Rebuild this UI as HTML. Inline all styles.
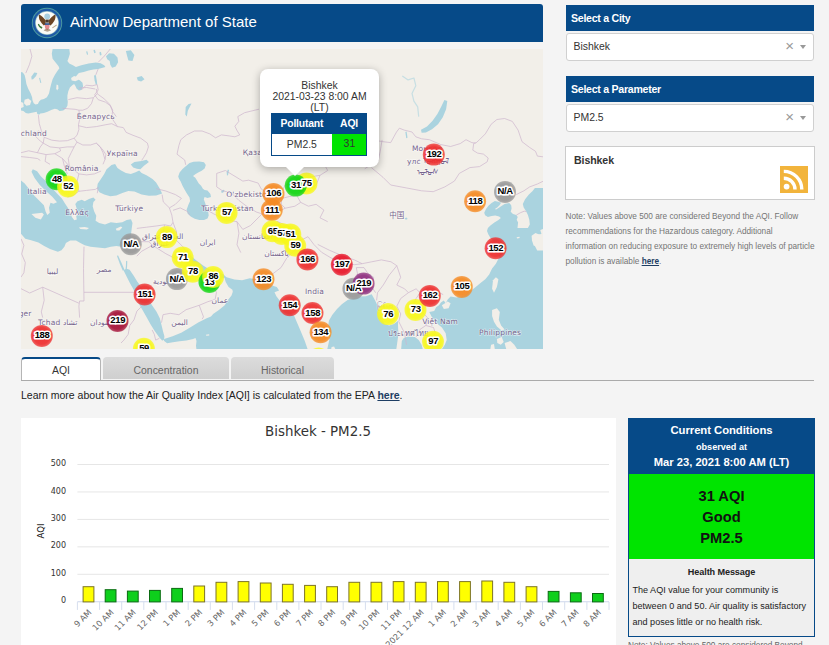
<!DOCTYPE html>
<html lang="en">
<head>
<meta charset="utf-8">
<title>AirNow Department of State</title>
<style>
html,body{margin:0;padding:0;}
body{width:829px;height:645px;overflow:hidden;background:#f4f4f4;font-family:"Liberation Sans",Arial,sans-serif;color:#222;position:relative;}
.abs{position:absolute;}
#hdr{left:21px;top:4px;width:522px;height:38px;background:#064a88;border-radius:3px 3px 0 0;}
#hdr .t{position:absolute;left:49px;top:7.5px;font-size:15px;color:#fff;white-space:nowrap;line-height:20px;}
#map{left:21px;top:49px;width:522px;height:300px;background:#f2efe9;overflow:hidden;}
.shdr{left:566px;width:248px;height:26px;background:#064a88;color:#fff;font-weight:bold;font-size:10.6px;line-height:26px;text-indent:5px;letter-spacing:-0.27px;}
.sel{left:565.5px;width:246.5px;height:26px;background:#fff;border:1px solid #d0d0d0;border-radius:3px;font-size:10.45px;line-height:26px;color:#333;}
.sel span.v{position:absolute;left:7px;top:0;}
.sel span.x{position:absolute;right:19px;top:-1px;color:#999;font-size:15px;}
.sel span.a{position:absolute;right:7px;top:11px;width:0;height:0;border-left:3.5px solid transparent;border-right:3.5px solid transparent;border-top:4px solid #999;}
#city{left:565px;top:146px;width:248px;height:52px;background:#fff;border:1px solid #ccc;}
#city b{position:absolute;left:8px;top:7px;font-size:10.6px;color:#333;letter-spacing:-0.1px}
#note{left:565.5px;top:209px;width:262px;white-space:nowrap;font-size:8.25px;line-height:15.05px;color:#757575;}
#note a{color:#1d3d63;font-weight:bold;text-decoration:underline;}
.tab{top:357px;height:22px;background:#d4d4d4;border-radius:4px 4px 0 0;font-size:10.45px;line-height:27px;text-align:center;color:#666;background:linear-gradient(#dcdcdc,#cfcfcf);}
#tab1{left:21px;width:78px;background:#fff;border:1px solid #b5b5b5;border-top:2px solid #064a88;border-bottom:none;height:22px;color:#333;line-height:24px;}
#tabline{left:21px;top:380px;width:793px;height:1px;background:#aaa;}
#learn{left:21px;top:388px;font-size:10.5px;color:#222;white-space:nowrap;line-height:15px;}
#learn a{color:#1d3d63;font-weight:bold;text-decoration:underline;}
#chart{left:21px;top:418px;width:595px;height:230px;background:#fff;}
#cc{left:628px;top:418px;width:185px;height:217px;border:1px solid #064a88;background:#efefef;}
#cc .top{position:absolute;left:0;top:0;width:185px;height:55px;background:#064a88;color:#fff;text-align:center;font-weight:bold;}
#cc .grn{position:absolute;left:0;top:55px;width:185px;height:85px;background:#00e400;color:#111;text-align:center;font-weight:bold;font-size:14.7px;}
#cc .ln{position:absolute;left:0;width:185px;text-align:center;white-space:nowrap;}
#cc .hm{position:absolute;left:3.5px;top:164px;width:180px;font-size:9.05px;line-height:15.8px;color:#222;}
#note2{left:628px;top:640.5px;font-size:8.25px;color:#666;white-space:nowrap;}
</style>
</head>
<body>
<div id="hdr" class="abs">
<svg style="position:absolute;left:10px;top:3px" width="32" height="32" viewBox="-16 -16 32 32">
<circle r="15.2" fill="#4f9c9f"/><circle r="14.3" fill="#1e5aa5"/><circle r="11.9" fill="#8fb9c4"/><circle r="11.2" fill="#fbfbf6"/>
<circle cx="0.2" cy="-6.6" r="2.9" fill="#a9cfe0"/>
<path d="M-1.2-2.5C-3-5-5.5-7.8-8-8.6c-.5 2.5.2 4.8 1.2 6.6.8 1.6 2 3.2 3.6 4.6l1.6-1.2z" fill="#6b4423"/>
<path d="M1.6-2.5C3.400-5 5.900-7.800 8.400-8.600c.5 2.500-.2 4.800-1.200 6.600-.8 1.600-2 3.200-3.600 4.600l-1.600-1.200z" fill="#6b4423"/>
<path d="M-1.400-3.400h3.200v3h-3.200z" fill="#4a3a2c"/>
<path d="M-2.100 .2h4.600v1.700h-4.600z" fill="#2e4f8e"/>
<path d="M-2.100 1.900h4.600v1.900c0 1.500-1 2.500-2.300 3.100-1.300-.6-2.300-1.600-2.300-3.100z" fill="#e58a8f"/>
<path d="M-9.200 1.200c.6 2.300 2 3.800 4 4.600l.6-1.600c-1.600-.6-2.800-1.600-3.400-3.400z" fill="#3c7a3a"/>
<path d="M5.200 4.400l4.200-2.800.4.800-4.200 2.800z" fill="#b9a58a"/>
<path d="M-3.400 7.400l2-1.600h3.400l2 1.600-3.700 1.400z" fill="#7a5a3a" opacity=".55"/>
</svg>
<div class="t">AirNow Department of State</div></div>
<div id="map" class="abs"><svg width="522" height="300" viewBox="0 0 522 300" style="position:absolute;left:0;top:0"><style>.mk{font:bold 9.5px "Liberation Sans",Arial,sans-serif;letter-spacing:-0.4px;text-anchor:middle;fill:#000;stroke:#fff;stroke-width:3.2px;stroke-linejoin:round;paint-order:stroke fill}.lb{font:7.5px "DejaVu Sans","Noto Sans CJK SC",sans-serif;letter-spacing:0.15px;fill:#75648c;stroke:#fff;stroke-opacity:.6;stroke-width:1.2px;paint-order:stroke fill}</style>
<rect width="522" height="300" fill="#f2efe9"/>
<path d="M31.6,0.0 48.3,0.0 48.9,4.8 47.6,9.0 46.4,12.1 48.3,14.5 51.9,16.3 54.9,18.1 60.3,16.3 67.6,14.5 74.8,13.5 79.6,14.2 83.2,16.3 84.4,18.1 80.8,19.1 77.2,19.9 72.4,20.5 67.6,21.5 62.7,22.9 57.9,24.1 56.1,25.9 54.3,28.3 56.7,30.2 59.1,31.6 61.5,33.8 62.1,37.4 60.3,41.0 57.9,41.6 55.7,39.8 54.3,36.8 53.1,35.0 51.3,36.2 48.9,38.6 47.3,42.2 46.4,46.4 46.4,49.5 46.8,53.1 46.4,56.7 44.6,59.7 42.2,61.5 38.6,62.1 36.2,60.3 33.8,59.7 30.2,60.9 26.5,62.7 22.9,63.9 19.3,64.5 18.1,65.7 16.3,65.1 15.7,62.7 13.3,63.3 9.7,63.9 7.2,64.5 4.8,63.9 2.4,62.1 0.0,61.5 -0.6,61.5 -0.6,22.9 0.0,22.9 1.8,23.5 3.6,25.9 4.6,30.2 5.4,35.0 7.2,39.8 9.7,44.6 11.1,48.3 11.5,51.3 12.7,54.3 14.5,55.5 16.9,54.9 18.1,52.5 19.9,50.7 22.9,50.1 25.9,48.3 28.0,44.6 29.0,39.8 30.2,35.0 31.6,30.2 33.8,25.9 36.2,22.3 38.4,19.3 37.4,16.9 34.4,13.3 31.6,9.7 30.8,4.8Z" fill="#aad3df" />
<path d="M85.0,7.2 88.1,4.2 92.9,4.8 96.5,8.4 97.1,13.3 94.7,17.5 91.1,18.7 89.3,15.7 88.7,12.1 86.2,10.3Z" fill="#aad3df" />
<path d="M73.0,26.5 74.8,25.9 75.8,31.4 76.2,35.6 74.8,35.6 73.6,31.4Z" fill="#aad3df" />
<path d="M10.3,27.7 13.3,23.5 16.3,24.1 15.1,27.1 12.1,30.2 10.6,30.4Z" fill="#aad3df" />
<path d="M18.1,29.0 19.1,28.7 20.3,33.8 19.3,34.0Z" fill="#aad3df" />
<path d="M104.9,1.9 109.8,1.2 113.4,6.0 111.5,12.1 107.4,11.6 106.2,7.2Z" fill="#aad3df" />
<path d="M115.8,28.5 120.6,27.0 123.5,30.2 120.1,32.6 116.8,31.4Z" fill="#aad3df" />
<path d="M90.5,116.0 94.1,115.0 96.5,119.1 100.1,121.5 104.9,123.9 109.8,125.1 114.6,123.2 118.2,121.5 120.6,123.9 125.5,126.3 131.5,130.0 135.1,133.6 138.7,139.6 141.1,144.4 135.1,146.4 127.9,146.8 120.6,145.6 113.4,142.5 107.4,142.0 101.3,143.9 95.3,146.4 89.3,147.3 83.2,145.6 78.4,143.2 76.0,139.6 76.7,134.8 79.6,130.4 83.2,125.1 85.6,120.3Z" fill="#aad3df" />
<path d="M109.8,115.5 113.4,113.1 120.6,111.9 125.5,110.7 127.9,113.1 123.0,116.7 119.4,120.3 115.8,119.8 112.2,118.4Z" fill="#aad3df" />
<path d="M157.2,127.5 158.6,123.4 161.5,120.0 165.0,117.0 168.5,114.1 172.6,112.7 178.4,112.4 183.0,113.2 184.8,115.9 183.6,119.4 180.7,121.7 177.2,123.4 174.3,125.2 172.0,126.9 174.3,128.7 176.0,131.6 177.8,134.5 180.1,136.8 181.9,139.7 183.6,140.9 186.5,141.5 189.4,145.0 190.0,147.9 186.5,149.0 183.6,148.1 182.8,150.2 183.6,152.5 185.3,157.2 187.1,161.8 187.7,166.5 186.5,169.4 183.0,170.9 178.4,171.1 173.7,169.7 169.7,167.6 166.7,164.7 165.6,160.7 167.3,156.0 169.1,151.9 168.5,148.4 166.2,145.0 163.8,140.9 161.5,136.8 159.8,132.7 158.0,129.8Z" fill="#aad3df" />
<path d="M205.7,123.4 206.9,120.5 208.0,120.9 207.2,125.2 206.0,126.9Z" fill="#aad3df" />
<path d="M200.2,142.0 202.2,140.7 203.7,141.5 202.2,143.4 200.7,144.1Z" fill="#aad3df" />
<path d="M-0.6,131.5 0.0,131.5 3.7,134.6 8.7,140.8 13.6,147.0 18.6,152.0 22.9,156.3 24.6,162.5 26.3,165.9 28.8,163.8 28.0,158.8 29.5,153.8 32.5,154.7 36.0,153.2 31.3,147.8 24.8,142.0 18.6,135.8 13.6,129.0 10.5,122.8 11.8,120.3 16.1,122.2 19.8,127.2 24.8,132.1 31.0,138.9 36.0,144.5 40.9,149.5 44.0,154.4 46.5,158.2 49.0,163.1 50.9,168.1 53.3,171.2 55.8,170.6 55.2,166.9 58.3,165.0 55.7,159.4 54.3,155.1 56.5,152.2 60.8,150.7 63.7,152.2 68.0,150.0 72.4,148.6 74.6,150.7 72.4,152.9 71.7,157.3 73.1,162.3 75.3,166.7 74.6,171.7 78.2,173.9 84.0,175.4 89.8,173.2 95.5,173.9 101.3,173.2 105.7,171.0 110.0,170.3 111.5,173.9 110.7,179.7 110.0,185.5 109.3,194.8 104.2,199.2 99.9,197.7 95.5,197.0 89.8,197.7 84.0,199.2 76.7,198.4 69.5,197.7 63.7,196.3 59.4,194.1 55.0,191.6 49.2,191.6 44.9,194.1 43.4,197.7 40.5,201.3 36.9,202.8 34.7,202.1 29.0,199.9 23.2,197.0 17.4,193.4 10.1,191.2 4.3,189.8 0.0,184.7 -0.7,184.0Z" fill="#aad3df" />
<path d="M95.9,206.7 97.1,206.4 100.1,213.0 103.5,220.7 101.8,221.7 98.8,214.7Z" fill="#aad3df" />
<path d="M105.1,211.8 106.3,212.2 106.1,217.3 105.6,221.5 104.4,221.2 104.9,216.9Z" fill="#aad3df" />
<path d="M102.5,221.2 105.6,227.5 109.0,234.3 112.4,240.3 115.5,248.0 118.4,255.7 121.8,261.6 125.2,267.6 129.5,275.3 133.7,282.1 138.0,288.1 141.1,291.6 143.1,290.6 143.4,287.2 142.2,282.9 140.5,276.1 138.8,269.3 135.4,262.5 131.2,256.5 126.4,248.8 123.7,242.9 120.6,238.6 116.2,232.6 112.7,226.7 108.6,220.7 105.6,219.7Z" fill="#aad3df" />
<path d="M141.1,291.6 142.8,290.6 143.9,289.8 151.6,287.2 160.2,283.8 168.7,278.7 177.2,273.6 185.7,269.3 190.0,267.6 192.1,264.9 197.9,261.1 203.7,256.3 206.6,251.4 210.5,246.6 211.8,242.7 211.4,240.8 207.6,237.9 204.7,233.1 202.7,226.3 205.6,228.3 213.4,230.6 221.1,231.2 228.8,229.2 236.5,230.6 244.2,233.1 251.0,236.4 255.8,237.9 258.1,241.4 253.5,243.3 255.4,247.2 260.7,254.3 267.4,261.1 273.2,266.9 279.0,280.4 283.8,292.0 287.1,301.6 175.5,301.0 175.0,296.7 175.5,291.9 174.5,289.0 172.1,289.9 165.4,291.4 158.6,292.3 151.9,293.3 146.1,294.3 143.2,291.9 140.8,287.5Z" fill="#aad3df" />
<path d="M164.7,202.8 167.0,204.1 174.7,210.9 182.5,216.7 190.2,221.5 197.9,223.4 202.7,225.4 204.7,228.3 201.8,229.2 196.0,230.6 186.3,232.5 178.6,226.7 169.0,219.0 164.1,210.9 162.8,206.1Z" fill="#aad3df" />
<path d="M326.6,251.0 337.2,247.6 344.9,247.2 350.7,245.3 353.6,250.5 356.5,256.3 358.8,262.0 360.4,267.8 363.3,274.6 368.1,276.5 372.9,275.0 377.0,271.9 377.0,276.5 377.4,285.2 376.2,293.9 375.1,301.6 305.9,301.6 306.3,300.1 308.3,291.0 307.3,276.5 307.9,271.7 311.2,265.9 316.0,260.1 320.8,255.3Z" fill="#aad3df" />
<path d="M380.1,301.0 380.8,291.9 382.8,289.0 387.1,287.5 393.9,288.0 397.7,290.9 400.6,295.7 402.0,301.0Z" fill="#aad3df" />
<path d="M467.2,179.0 470.1,184.8 475.9,189.7 478.8,199.3 477.8,209.0 474.9,214.7 471.1,219.6 468.2,225.4 464.3,230.2 459.5,234.1 454.7,237.9 449.8,241.8 443.1,246.6 435.4,248.5 429.6,247.6 426.7,250.5 424.7,254.3 422.8,251.4 419.9,253.4 418.0,256.3 415.1,258.2 413.2,262.0 408.3,263.0 411.2,268.8 416.1,274.6 420.9,278.5 424.7,284.2 425.7,291.0 423.8,295.8 419.9,301.6 524.2,301.6 524.2,179.0Z" fill="#aad3df" />
<path d="M463.2,163.7 465.0,160.0 467.4,156.8 470.6,154.0 473.9,152.1 477.1,152.8 480.1,153.8 478.5,156.3 476.2,158.4 473.9,160.0 475.1,160.5 479.0,157.9 483.6,155.1 488.3,154.0 490.2,156.3 490.6,159.5 489.7,162.8 492.0,165.1 495.3,166.1 496.7,167.9 495.7,170.7 497.1,173.5 496.7,177.2 496.2,181.0 496.9,183.4 500.4,182.8 504.1,181.4 506.9,179.1 508.8,175.4 508.3,170.7 506.9,166.1 505.1,162.3 502.7,158.6 501.8,154.9 504.1,150.2 507.9,145.6 511.6,141.9 513.9,139.1 523.7,139.1 523.7,201.4 473.2,201.4 473.6,195.9 472.0,191.2 469.2,188.4 467.4,185.6 466.0,181.9 466.9,179.1 469.7,176.3 473.4,173.5 477.1,171.2 479.9,169.0 478.1,167.6 474.3,166.6 470.6,167.1 466.9,168.0 464.1,166.2Z" fill="#aad3df" />
<path d="M400.0,80.7 406.0,77.6 411.6,71.8 416.4,65.1 420.3,57.5 423.4,51.0 426.3,52.1 425.1,60.2 421.8,68.3 417.0,75.3 411.0,80.3 404.9,83.6 400.6,83.8Z" fill="#aad3df" />
<path d="M384.4,83.0 385.6,82.6 386.5,88.8 385.2,89.2Z" fill="#aad3df" />
<path d="M164.7,57.9 167.6,55.0 170.5,54.4 168.7,57.9 166.8,61.8 165.8,67.6 164.3,65.6Z" fill="#aad3df" />
<path d="M383.6,169.2 385.6,168.4 386.7,170.0 384.8,170.7Z" fill="#aad3df" />
<path d="M65.1,2.4 66.3,2.2 67.1,5.4 66.0,5.8Z" fill="#aad3df" />
<path d="M72.4,1.2 73.8,0.7 74.8,3.6 73.3,4.2Z" fill="#aad3df" />
<path d="M78.4,3.6 79.9,2.7 80.6,6.0 79.0,6.6Z" fill="#aad3df" />
<path d="M3.6,50.7 7.2,49.5 10.3,51.9 9.0,56.1 5.4,56.7 3.0,54.3Z" fill="#f2efe9" />
<path d="M0.0,53.1 2.2,53.7 2.7,57.9 0.0,59.1Z" fill="#f2efe9" />
<path d="M50.1,29.0 53.1,27.1 56.7,28.3 57.7,30.8 54.3,32.3 50.7,31.6Z" fill="#f2efe9" />
<path d="M35.6,35.6 37.2,36.2 37.4,39.2 36.2,41.6 35.2,39.8Z" fill="#f2efe9" />
<path d="M10.5,165.0 21.1,163.8 22.9,165.6 19.8,170.6 14.3,168.7Z" fill="#f2efe9" />
<path d="M57.9,178.5 63.7,178.0 68.0,179.1 65.9,180.6 59.4,180.0Z" fill="#f2efe9" />
<path d="M94.8,179.7 99.9,177.5 101.3,178.5 98.4,181.4 95.5,181.4Z" fill="#f2efe9" />
<path d="M309.8,301.6 310.6,298.1 313.1,297.4 315.0,301.6Z" fill="#f2efe9" />
<path d="M420.9,256.3 426.7,252.4 429.6,254.3 427.6,259.2 422.8,260.1Z" fill="#f2efe9" />
<path d="M472.0,231.2 474.9,228.3 477.4,230.2 475.9,237.9 473.0,243.7 471.1,239.8Z" fill="#f2efe9" />
<path d="M471.1,261.1 475.9,259.2 478.8,263.0 477.8,270.7 480.1,276.5 483.6,280.4 480.7,281.4 475.9,277.5 473.0,272.7 471.1,266.9Z" fill="#f2efe9" />
<path d="M475.9,290.0 480.7,288.1 482.7,292.9 479.8,295.8 476.3,293.9Z" fill="#f2efe9" />
<path d="M483.6,293.9 489.4,292.0 493.3,295.8 497.1,301.6 485.6,301.6Z" fill="#f2efe9" />
<path d="M470.1,295.8 473.0,294.9 474.0,301.6 469.1,301.6Z" fill="#f2efe9" />
<path d="M510.6,186.8 514.5,183.9 518.8,185.8 519.3,191.6 516.4,197.8 512.6,196.4 511.0,191.6Z" fill="#f2efe9" />
<path d="M519.3,181.0 524.2,179.0 524.2,187.7 520.7,185.8Z" fill="#f2efe9" />
<path d="M512.5,188.4 517.2,185.6 523.7,184.5 523.7,201.4 516.2,201.4 513.4,195.9 511.6,192.1Z" fill="#f2efe9" />
<path d="M495.6,188.2 498.4,187.8 498.7,189.1 496.1,189.5Z" fill="#f2efe9" />
<path d="M184.9,285.7 188.1,285.3 188.3,286.4 185.3,286.7Z" fill="#f2efe9" />
<path d="M381.3,27.0 387.1,30.9 392.9,29.0 394.8,36.7 391.0,44.4 392.9,52.1 396.7,57.9 397.7,67.6" fill="none" stroke="#aad3df" stroke-width="1.2" stroke-opacity="0.6" stroke-linejoin="round"/>
<path d="M17.4,66.1 18.3,74.7 20.3,81.5 23.2,88.3" fill="none" stroke="#cdb5cd" stroke-width="0.7" stroke-linejoin="round"/>
<path d="M41.5,59.3 54.1,60.3 57.9,61.2" fill="none" stroke="#cdb5cd" stroke-width="0.7" stroke-linejoin="round"/>
<path d="M47.3,50.6 56.0,48.7 65.6,49.7 72.4,48.7 70.5,54.5 66.6,59.3 61.8,61.2 57.9,61.2 58.9,69.0 57.5,75.7 57.9,80.5 56.0,86.3 53.1,89.2" fill="none" stroke="#cdb5cd" stroke-width="0.7" stroke-linejoin="round"/>
<path d="M57.5,76.7 65.6,78.6 75.3,77.6 84.9,75.7 90.7,74.7 96.5,77.6" fill="none" stroke="#cdb5cd" stroke-width="0.7" stroke-linejoin="round"/>
<path d="M75.3,40.0 76.3,44.8 83.0,49.7 88.8,55.4 91.7,61.2 90.7,69.0 96.5,77.6 102.3,78.6 105.2,83.4 112.0,86.3 119.7,89.2 126.4,94.1 127.4,97.9 125.5,103.7 122.6,108.5 120.7,111.4" fill="none" stroke="#cdb5cd" stroke-width="0.7" stroke-linejoin="round"/>
<path d="M76.3,44.8 72.4,48.7" fill="none" stroke="#cdb5cd" stroke-width="0.7" stroke-linejoin="round"/>
<path d="M23.2,88.3 30.9,91.2 38.6,92.1 46.3,91.7 53.1,89.2 56.0,93.1 61.8,96.0 69.5,96.0 75.3,94.1 79.2,97.9 82.0,103.7 84.0,110.5 82.0,115.3" fill="none" stroke="#cdb5cd" stroke-width="0.7" stroke-linejoin="round"/>
<path d="M75.3,94.1 81.1,99.8 84.9,105.6 84.0,110.5" fill="none" stroke="#cdb5cd" stroke-width="0.7" stroke-linejoin="round"/>
<path d="M48.3,117.2 53.1,121.1 57.9,124.9 65.6,125.9 73.4,124.9 80.1,122.0" fill="none" stroke="#cdb5cd" stroke-width="0.7" stroke-linejoin="round"/>
<path d="M53.1,97.9 50.2,103.7 47.3,109.5 48.3,117.2" fill="none" stroke="#cdb5cd" stroke-width="0.7" stroke-linejoin="round"/>
<path d="M23.2,88.3 22.2,94.1 29.0,97.9 38.6,98.9 46.3,97.9 53.1,97.9 56.0,93.1" fill="none" stroke="#cdb5cd" stroke-width="0.7" stroke-linejoin="round"/>
<path d="M16.4,103.7 25.1,105.6 33.8,104.7 39.6,101.8 38.6,98.9" fill="none" stroke="#cdb5cd" stroke-width="0.7" stroke-linejoin="round"/>
<path d="M17.4,81.5 14.5,87.3 19.3,92.1 22.2,94.1 19.3,97.9 16.4,103.7 7.7,101.8 0.0,103.7" fill="none" stroke="#cdb5cd" stroke-width="0.7" stroke-linejoin="round"/>
<path d="M0.0,107.6 8.7,108.5 16.4,109.5 19.3,111.4" fill="none" stroke="#cdb5cd" stroke-width="0.7" stroke-linejoin="round"/>
<path d="M25.1,105.6 24.1,112.4 29.0,115.3" fill="none" stroke="#cdb5cd" stroke-width="0.7" stroke-linejoin="round"/>
<path d="M33.8,104.7 41.5,109.5 48.3,117.2" fill="none" stroke="#cdb5cd" stroke-width="0.7" stroke-linejoin="round"/>
<path d="M41.5,109.5 43.4,117.2 46.3,124.9" fill="none" stroke="#cdb5cd" stroke-width="0.7" stroke-linejoin="round"/>
<path d="M57.9,124.9 56.0,132.7 57.9,142.3 65.6,141.4 74.3,140.4 77.2,138.5 76.3,144.2" fill="none" stroke="#cdb5cd" stroke-width="0.7" stroke-linejoin="round"/>
<path d="M46.3,148.1 52.1,146.2 57.9,142.3" fill="none" stroke="#cdb5cd" stroke-width="0.7" stroke-linejoin="round"/>
<path d="M57.9,39.0 65.6,38.5 74.3,40.0" fill="none" stroke="#cdb5cd" stroke-width="0.7" stroke-linejoin="round"/>
<path d="M9.0,0.0 10.9,7.2 8.4,15.7 4.8,24.1" fill="none" stroke="#cdb5cd" stroke-width="0.7" stroke-linejoin="round"/>
<path d="M89.3,0.0 83.2,7.2 77.2,13.3" fill="none" stroke="#cdb5cd" stroke-width="0.7" stroke-linejoin="round"/>
<path d="M77.2,19.9 74.8,25.9" fill="none" stroke="#cdb5cd" stroke-width="0.7" stroke-linejoin="round"/>
<path d="M76.2,35.6 77.2,41.0 73.6,45.8 77.2,50.7 84.4,53.1 89.3,56.7 91.7,62.7 95.3,67.6" fill="none" stroke="#cdb5cd" stroke-width="0.7" stroke-linejoin="round"/>
<path d="M60.3,41.0 65.1,36.2 71.2,36.8 76.2,35.6" fill="none" stroke="#cdb5cd" stroke-width="0.7" stroke-linejoin="round"/>
<path d="M164.7,115.8 163.7,111.0 159.8,108.1 156.0,105.2 157.9,96.5 159.8,90.7 165.6,85.9 173.4,82.0 181.1,82.0 188.8,84.9 194.6,88.8 200.4,85.9 208.1,86.9 213.9,87.8 218.7,85.9 215.8,81.1 213.9,77.2 217.8,72.4 216.8,67.6 223.6,63.7 231.3,61.8 238.0,60.2" fill="none" stroke="#cdb5cd" stroke-width="0.7" stroke-linejoin="round"/>
<path d="M115.8,179.4 125.5,178.2 135.1,177.0 143.5,175.8 149.6,177.0 152.0,173.4 150.8,166.1 148.4,158.9 142.3,152.9 141.1,145.6" fill="none" stroke="#cdb5cd" stroke-width="0.7" stroke-linejoin="round"/>
<path d="M135.1,139.6 144.8,142.0 154.4,145.6 160.4,149.3" fill="none" stroke="#cdb5cd" stroke-width="0.7" stroke-linejoin="round"/>
<path d="M148.4,158.9 154.4,155.3 160.4,149.3" fill="none" stroke="#cdb5cd" stroke-width="0.7" stroke-linejoin="round"/>
<path d="M152.0,161.3 159.2,158.9 166.5,162.5 168.9,166.1" fill="none" stroke="#cdb5cd" stroke-width="0.7" stroke-linejoin="round"/>
<path d="M152.0,173.4 155.6,183.0 154.4,190.3 161.6,197.5 166.5,204.7 167.7,208.4" fill="none" stroke="#cdb5cd" stroke-width="0.7" stroke-linejoin="round"/>
<path d="M143.5,175.8 142.3,183.0 133.9,189.1 127.9,192.7 131.5,196.3 120.6,202.3 115.8,207.2" fill="none" stroke="#cdb5cd" stroke-width="0.7" stroke-linejoin="round"/>
<path d="M131.5,196.3 144.8,204.7 156.8,210.8 164.1,209.6" fill="none" stroke="#cdb5cd" stroke-width="0.7" stroke-linejoin="round"/>
<path d="M115.3,193.9 120.6,192.7 127.9,192.7" fill="none" stroke="#cdb5cd" stroke-width="0.7" stroke-linejoin="round"/>
<path d="M63.0,197.7 62.5,219.4 63.0,252.0" fill="none" stroke="#cdb5cd" stroke-width="0.7" stroke-linejoin="round"/>
<path d="M63.0,243.3 112.9,243.3" fill="none" stroke="#cdb5cd" stroke-width="0.7" stroke-linejoin="round"/>
<path d="M63.0,252.0 58.6,252.0 57.9,257.1 58.6,268.6" fill="none" stroke="#cdb5cd" stroke-width="0.7" stroke-linejoin="round"/>
<path d="M57.9,254.2 21.7,238.2 8.7,244.0 0.0,239.7" fill="none" stroke="#cdb5cd" stroke-width="0.7" stroke-linejoin="round"/>
<path d="M21.7,238.2 23.2,251.3 20.3,262.9 21.7,268.6" fill="none" stroke="#cdb5cd" stroke-width="0.7" stroke-linejoin="round"/>
<path d="M0.0,189.8 2.9,196.3 0.7,205.0 4.3,213.6 2.9,223.8 0.0,228.1" fill="none" stroke="#cdb5cd" stroke-width="0.7" stroke-linejoin="round"/>
<path d="M140.5,273.7 142.0,265.7 149.2,264.3 157.9,265.7 165.1,260.7 178.2,256.3 186.9,252.7 194.1,250.5" fill="none" stroke="#cdb5cd" stroke-width="0.7" stroke-linejoin="round"/>
<path d="M178.2,256.3 182.5,267.9 181.1,270.1" fill="none" stroke="#cdb5cd" stroke-width="0.7" stroke-linejoin="round"/>
<path d="M194.1,250.5 195.5,243.3 192.6,239.0" fill="none" stroke="#cdb5cd" stroke-width="0.7" stroke-linejoin="round"/>
<path d="M120.3,257.8 115.9,262.1 113.0,270.8 108.7,276.6 107.2,285.3 102.9,291.1 100.0,294.0" fill="none" stroke="#cdb5cd" stroke-width="0.7" stroke-linejoin="round"/>
<path d="M138.4,289.3 134.7,291.1 133.3,285.3 131.1,280.9" fill="none" stroke="#cdb5cd" stroke-width="0.7" stroke-linejoin="round"/>
<path d="M195.7,124.4 204.4,121.5 221.8,132.1 227.6,131.2 237.2,134.1 240.1,139.8 244.9,143.7 252.7,141.8 260.4,143.7 264.2,136.0 275.8,132.1 287.4,128.3 299.0,126.3 306.7,121.5 302.9,114.7 310.6,110.9 322.2,105.1" fill="none" stroke="#cdb5cd" stroke-width="0.7" stroke-linejoin="round"/>
<path d="M195.7,124.4 195.7,137.9 201.5,141.8 210.2,143.7 217.9,151.4 225.6,157.2 235.3,163.0 241.1,164.9" fill="none" stroke="#cdb5cd" stroke-width="0.7" stroke-linejoin="round"/>
<path d="M186.1,161.1 192.8,164.9 204.4,170.7 216.0,172.7 221.8,180.4 229.5,176.5 241.1,164.9 250.7,163.0 260.4,161.1 264.2,159.2" fill="none" stroke="#cdb5cd" stroke-width="0.7" stroke-linejoin="round"/>
<path d="M216.0,172.7 217.9,184.2 216.0,195.8 219.8,203.6" fill="none" stroke="#cdb5cd" stroke-width="0.7" stroke-linejoin="round"/>
<path d="M299.0,126.3 295.1,136.0 283.6,143.7 275.8,146.6 268.1,147.6 260.4,149.5 260.4,155.3 264.2,159.2 273.9,157.2 279.7,153.4 275.8,146.6" fill="none" stroke="#cdb5cd" stroke-width="0.7" stroke-linejoin="round"/>
<path d="M279.7,153.4 287.4,157.2 295.1,155.3 302.9,161.1 299.0,168.8 306.7,172.7" fill="none" stroke="#cdb5cd" stroke-width="0.7" stroke-linejoin="round"/>
<path d="M271.6,180.0 279.3,191.6 273.5,201.2 265.8,209.0 260.0,218.6 252.3,224.4 248.4,230.2" fill="none" stroke="#cdb5cd" stroke-width="0.7" stroke-linejoin="round"/>
<path d="M256.1,172.3 263.9,176.1 271.6,180.0" fill="none" stroke="#cdb5cd" stroke-width="0.7" stroke-linejoin="round"/>
<path d="M292.8,195.4 300.5,203.2 310.2,209.0 321.8,213.8 333.4,215.7 341.1,214.7 350.7,212.8 360.4,210.9 370.0,212.8 375.8,216.7" fill="none" stroke="#cdb5cd" stroke-width="0.7" stroke-linejoin="round"/>
<path d="M296.7,195.4 308.3,201.2 321.8,207.0 333.4,210.9 341.1,214.7" fill="none" stroke="#cdb5cd" stroke-width="0.7" stroke-linejoin="round"/>
<path d="M335.3,218.6 343.0,218.6 346.9,224.4 352.7,228.3 350.7,237.9 354.6,243.7" fill="none" stroke="#cdb5cd" stroke-width="0.7" stroke-linejoin="round"/>
<path d="M335.3,218.6 337.2,228.3 336.3,237.9" fill="none" stroke="#cdb5cd" stroke-width="0.7" stroke-linejoin="round"/>
<path d="M375.8,216.7 368.1,226.3 362.3,236.0 356.5,243.7 355.6,251.4" fill="none" stroke="#cdb5cd" stroke-width="0.7" stroke-linejoin="round"/>
<path d="M375.8,216.7 379.7,228.3 375.8,236.0 383.6,239.8 387.4,243.7 379.7,249.5 375.8,257.2 379.7,264.9 377.8,272.7 383.6,284.2 385.5,295.8" fill="none" stroke="#cdb5cd" stroke-width="0.7" stroke-linejoin="round"/>
<path d="M387.4,243.7 395.1,239.8 399.0,243.7 395.1,249.5 391.3,257.2 399.0,261.1 406.7,268.8 404.8,276.5 399.0,280.4 395.1,288.1" fill="none" stroke="#cdb5cd" stroke-width="0.7" stroke-linejoin="round"/>
<path d="M399.0,243.7 406.7,239.8 414.4,241.8 422.2,245.6" fill="none" stroke="#cdb5cd" stroke-width="0.7" stroke-linejoin="round"/>
<path d="M404.8,276.5 412.5,278.5 414.4,284.2 410.6,290.0" fill="none" stroke="#cdb5cd" stroke-width="0.7" stroke-linejoin="round"/>
<path d="M279.3,191.6 287.0,187.7 292.8,195.4" fill="none" stroke="#cdb5cd" stroke-width="0.7" stroke-linejoin="round"/>
<path d="M350.4,90.7 362.0,92.7 369.7,93.6 375.5,83.0 378.4,79.2 383.2,81.1 391.0,83.0 394.8,87.8 400.6,89.8 408.3,90.7 419.9,95.6 429.6,97.5 439.2,94.6 445.0,90.7 450.8,93.6 454.7,94.2 458.5,90.7 464.3,84.9 470.1,75.3 475.9,70.5 483.6,69.5 491.3,72.4 497.1,81.1 501.0,92.7 508.7,98.5 514.5,102.3 516.4,107.1 524.2,108.1" fill="none" stroke="#cdb5cd" stroke-width="0.7" stroke-linejoin="round"/>
<path d="M350.4,118.6 362.0,128.3 369.7,136.0 385.2,138.9 400.6,141.8 412.2,142.7 423.8,137.9 433.4,132.1 438.3,124.4 448.9,118.6 458.5,117.6 466.2,112.8 467.2,109.0 462.4,105.1 456.6,104.1 451.8,101.2 452.7,94.5 454.7,93.5" fill="none" stroke="#cdb5cd" stroke-width="0.7" stroke-linejoin="round"/>
<path d="M343.7,119.8 349.5,116.0 357.2,112.1 359.2,102.5 361.1,90.9" fill="none" stroke="#cdb5cd" stroke-width="0.7" stroke-linejoin="round"/>
<path d="M495.2,145.6 502.9,141.8 508.7,137.9 516.4,135.0 524.2,131.2" fill="none" stroke="#cdb5cd" stroke-width="0.7" stroke-linejoin="round"/>
<path d="M495.3,166.1 499.5,163.7 503.2,162.2 505.2,162.5" fill="none" stroke="#cdb5cd" stroke-width="0.7" stroke-linejoin="round"/>
<text x="74.8" y="70.0" class="lb" text-anchor="middle">Беларусь</text>
<text x="101.3" y="106.5" class="lb" text-anchor="middle">Україна</text>
<text x="60.6" y="121.5" class="lb" text-anchor="middle">România</text>
<text x="25.8" y="87.0" class="lb" text-anchor="end">chland</text>
<text x="16.0" y="144.7" class="lb" text-anchor="middle">Italia</text>
<text x="56.1" y="166.0" class="lb" text-anchor="middle">Ελλάς</text>
<text x="108.2" y="161.7" class="lb" text-anchor="middle">Türkiye</text>
<text x="221.8" y="106.0" class="lb" text-anchor="start">Қазақстан</text>
<text x="205.2" y="148.0" class="lb" text-anchor="start">O'zbekiston</text>
<text x="206.4" y="161.5" class="lb" text-anchor="middle">Türkmenistan</text>
<text x="186.6" y="195.5" class="lb" text-anchor="middle">ایران</text>
<text x="141.7" y="190.0" class="lb" text-anchor="middle">العراق عێراق</text>
<text x="139.0" y="196.5" class="lb" text-anchor="middle">عيراق</text>
<text x="146.0" y="234.5" class="lb" text-anchor="middle">السعودية</text>
<text x="83.2" y="223.0" class="lb" text-anchor="middle">مصر</text>
<text x="31.5" y="224.5" class="lb" text-anchor="middle">ليبيا</text>
<text x="158.6" y="275.5" class="lb" text-anchor="middle">اليمن</text>
<text x="198.9" y="253.5" class="lb" text-anchor="middle">عمان</text>
<text x="36.7" y="276.0" class="lb" text-anchor="middle">Tchad تشاد</text>
<text x="82.0" y="276.0" class="lb" text-anchor="middle">السودان</text>
<text x="10.6" y="266.5" class="lb" text-anchor="end">ger</text>
<text x="236.3" y="189.5" class="lb" text-anchor="middle">افغانستان</text>
<text x="255.5" y="206.5" class="lb" text-anchor="middle">پاکستان</text>
<text x="293.5" y="245.0" class="lb" text-anchor="middle">India</text>
<text x="375.8" y="169.0" class="lb" text-anchor="middle">中国</text>
<text x="391.0" y="102.0" class="lb" text-anchor="start">Монгол</text>
<text x="386.0" y="114.5" class="lb" text-anchor="start">улс ᠮᠣᠩᠭᠣᠯ</text>
<text x="406.4" y="125.5" class="lb" text-anchor="middle">ᠤᠯᠤᠰ</text>
<text x="419.0" y="274.5" class="lb" text-anchor="middle">Việt Nam</text>
<text x="387.1" y="287.0" class="lb" text-anchor="middle">ประเทศไทย</text>
<text x="479.1" y="285.5" class="lb" text-anchor="middle">Philippines</text>
<text x="364.2" y="259.0" class="lb" text-anchor="middle">မြန်မာ</text>
<defs>
<radialGradient id="gg"><stop offset="0" stop-color="#12d612" stop-opacity="0.95"/><stop offset="0.75" stop-color="#12d612" stop-opacity="0.93"/><stop offset="0.9" stop-color="#12d612" stop-opacity="0.82"/><stop offset="1" stop-color="#12d612" stop-opacity="0.7"/></radialGradient>
<radialGradient id="gy"><stop offset="0" stop-color="#f8f81a" stop-opacity="0.95"/><stop offset="0.75" stop-color="#f8f81a" stop-opacity="0.93"/><stop offset="0.9" stop-color="#f8f81a" stop-opacity="0.82"/><stop offset="1" stop-color="#f8f81a" stop-opacity="0.7"/></radialGradient>
<radialGradient id="go"><stop offset="0" stop-color="#f58a23" stop-opacity="0.95"/><stop offset="0.75" stop-color="#f58a23" stop-opacity="0.93"/><stop offset="0.9" stop-color="#f58a23" stop-opacity="0.82"/><stop offset="1" stop-color="#f58a23" stop-opacity="0.7"/></radialGradient>
<radialGradient id="gr"><stop offset="0" stop-color="#ee2f2f" stop-opacity="0.95"/><stop offset="0.75" stop-color="#ee2f2f" stop-opacity="0.93"/><stop offset="0.9" stop-color="#ee2f2f" stop-opacity="0.82"/><stop offset="1" stop-color="#ee2f2f" stop-opacity="0.7"/></radialGradient>
<radialGradient id="gp"><stop offset="0" stop-color="#8f2f7f" stop-opacity="0.95"/><stop offset="0.75" stop-color="#8f2f7f" stop-opacity="0.93"/><stop offset="0.9" stop-color="#8f2f7f" stop-opacity="0.82"/><stop offset="1" stop-color="#8f2f7f" stop-opacity="0.7"/></radialGradient>
<radialGradient id="gm"><stop offset="0" stop-color="#a51238" stop-opacity="0.95"/><stop offset="0.75" stop-color="#a51238" stop-opacity="0.93"/><stop offset="0.9" stop-color="#a51238" stop-opacity="0.82"/><stop offset="1" stop-color="#a51238" stop-opacity="0.7"/></radialGradient>
<radialGradient id="gx"><stop offset="0" stop-color="#999999" stop-opacity="0.95"/><stop offset="0.75" stop-color="#999999" stop-opacity="0.93"/><stop offset="0.9" stop-color="#999999" stop-opacity="0.82"/><stop offset="1" stop-color="#999999" stop-opacity="0.7"/></radialGradient>
<radialGradient id="gR"><stop offset="0" stop-color="#e8172a" stop-opacity="0.95"/><stop offset="0.75" stop-color="#e8172a" stop-opacity="0.93"/><stop offset="0.9" stop-color="#e8172a" stop-opacity="0.82"/><stop offset="1" stop-color="#e8172a" stop-opacity="0.7"/></radialGradient>
</defs>
<circle cx="297.6" cy="309.5" r="11" fill="url(#gy)"/>
<circle cx="122.9" cy="299.8" r="11" fill="url(#gy)"/>
<circle cx="20.8" cy="286.9" r="11" fill="url(#gr)"/>
<circle cx="96.5" cy="271.9" r="11" fill="url(#gm)"/>
<circle cx="123.6" cy="245.5" r="11" fill="url(#gr)"/>
<circle cx="109.8" cy="195.3" r="11" fill="url(#gx)"/>
<circle cx="145.7" cy="188.1" r="11" fill="url(#gy)"/>
<circle cx="161.7" cy="208.4" r="11" fill="url(#gy)"/>
<circle cx="155.9" cy="230.1" r="11" fill="url(#gx)"/>
<circle cx="171.8" cy="222.8" r="11" fill="url(#gy)"/>
<circle cx="188.4" cy="233.0" r="11" fill="url(#gg)"/>
<circle cx="192.1" cy="227.9" r="11" fill="url(#gy)"/>
<circle cx="35.6" cy="130.3" r="11" fill="url(#gg)"/>
<circle cx="47.0" cy="137.5" r="11" fill="url(#gy)"/>
<circle cx="205.6" cy="163.9" r="11" fill="url(#gy)"/>
<circle cx="252.5" cy="144.9" r="11" fill="url(#go)"/>
<circle cx="250.8" cy="161.0" r="11" fill="url(#go)"/>
<circle cx="285.5" cy="134.5" r="11" fill="url(#gy)"/>
<circle cx="274.7" cy="136.6" r="11" fill="url(#gg)"/>
<circle cx="251.5" cy="182.2" r="11" fill="url(#gy)"/>
<circle cx="260.9" cy="184.9" r="11" fill="url(#gy)"/>
<circle cx="269.3" cy="185.4" r="11" fill="url(#gy)"/>
<circle cx="274.2" cy="196.8" r="11" fill="url(#gy)"/>
<circle cx="286.4" cy="210.4" r="11" fill="url(#gr)"/>
<circle cx="242.5" cy="230.3" r="11" fill="url(#go)"/>
<circle cx="320.8" cy="215.7" r="11" fill="url(#gR)"/>
<circle cx="332.4" cy="239.8" r="11" fill="url(#gx)"/>
<circle cx="342.6" cy="234.6" r="11" fill="url(#gp)"/>
<circle cx="268.7" cy="256.3" r="11" fill="url(#gr)"/>
<circle cx="291.5" cy="264.0" r="11" fill="url(#gr)"/>
<circle cx="299.6" cy="283.3" r="11" fill="url(#go)"/>
<circle cx="367.0" cy="265.1" r="11" fill="url(#gy)"/>
<circle cx="394.5" cy="260.9" r="11" fill="url(#gy)"/>
<circle cx="408.8" cy="246.9" r="11" fill="url(#gr)"/>
<circle cx="440.8" cy="237.9" r="11" fill="url(#go)"/>
<circle cx="412.0" cy="292.7" r="11" fill="url(#gy)"/>
<circle cx="474.6" cy="199.2" r="11" fill="url(#gr)"/>
<circle cx="454.1" cy="152.3" r="11" fill="url(#go)"/>
<circle cx="484.0" cy="142.9" r="11" fill="url(#gx)"/>
<circle cx="412.8" cy="105.6" r="11" fill="url(#gr)"/>
<text x="297.6" y="312.0" class="mk" dx="0.2">59</text>
<text x="122.9" y="302.3" class="mk" dx="0.2">59</text>
<text x="20.8" y="289.4" class="mk" dx="0.2">188</text>
<text x="96.5" y="274.4" class="mk" dx="0.2">219</text>
<text x="123.6" y="248.0" class="mk" dx="0.2">151</text>
<text x="109.8" y="197.8" class="mk" dx="0.2">N/A</text>
<text x="145.7" y="190.6" class="mk" dx="0.2">89</text>
<text x="161.7" y="210.9" class="mk" dx="0.2">71</text>
<text x="155.9" y="232.6" class="mk" dx="0.2">N/A</text>
<text x="171.8" y="225.3" class="mk" dx="0.2">78</text>
<text x="188.4" y="235.5" class="mk" dx="0.2">13</text>
<text x="192.1" y="230.4" class="mk" dx="0.2">86</text>
<text x="35.6" y="132.8" class="mk" dx="0.2">48</text>
<text x="47.0" y="140.0" class="mk" dx="0.2">52</text>
<text x="205.6" y="166.4" class="mk" dx="0.2">57</text>
<text x="252.5" y="147.4" class="mk" dx="0.2">106</text>
<text x="250.8" y="163.5" class="mk" dx="0.2">111</text>
<text x="285.5" y="137.0" class="mk" dx="0.2">75</text>
<text x="274.7" y="139.1" class="mk" dx="0.2">31</text>
<text x="251.5" y="184.7" class="mk" dx="0.2">65</text>
<text x="260.9" y="187.4" class="mk" dx="0.2">57</text>
<text x="269.3" y="187.9" class="mk" dx="0.2">51</text>
<text x="274.2" y="199.3" class="mk" dx="0.2">59</text>
<text x="286.4" y="212.9" class="mk" dx="0.2">166</text>
<text x="242.5" y="232.8" class="mk" dx="0.2">123</text>
<text x="320.8" y="218.2" class="mk" dx="0.2">197</text>
<text x="332.4" y="242.3" class="mk" dx="0.2">N/A</text>
<text x="342.6" y="237.1" class="mk" dx="0.2">219</text>
<text x="268.7" y="258.8" class="mk" dx="0.2">154</text>
<text x="291.5" y="266.5" class="mk" dx="0.2">158</text>
<text x="299.6" y="285.8" class="mk" dx="0.2">134</text>
<text x="367.0" y="267.6" class="mk" dx="0.2">76</text>
<text x="394.5" y="263.4" class="mk" dx="0.2">73</text>
<text x="408.8" y="249.4" class="mk" dx="0.2">162</text>
<text x="440.8" y="240.4" class="mk" dx="0.2">105</text>
<text x="412.0" y="295.2" class="mk" dx="0.2">97</text>
<text x="474.6" y="201.7" class="mk" dx="0.2">152</text>
<text x="454.1" y="154.8" class="mk" dx="0.2">118</text>
<text x="484.0" y="145.4" class="mk" dx="0.2">N/A</text>
<text x="412.8" y="108.1" class="mk" dx="0.2">192</text>
</svg>
<div style="position:absolute;left:238.7px;top:19.7px;width:119.6px;height:98.4px;background:#fff;border-radius:8px;box-shadow:0 2px 8px rgba(0,0,0,0.3)"></div><div style="position:absolute;left:265.4px;top:117.6px;width:0;height:0;border-left:9px solid transparent;border-right:9px solid transparent;border-top:9px solid #fff"></div><div style="position:absolute;left:238.7px;top:30.5px;width:119.6px;text-align:center;font-size:10.4px;line-height:11.1px;color:#333">Bishkek<br>2021-03-23 8:00 AM<br>(LT)</div><div style="position:absolute;left:250px;top:64px;width:94.4px;height:40.9px;border:1px solid #064a88;background:#fff;font-size:10.4px;color:#333"><div style="position:absolute;left:0;top:0;width:94.4px;height:19.8px;background:#064a88"></div><div style="position:absolute;left:0;top:0;width:59.7px;text-align:center;line-height:19.8px;color:#fff;font-weight:bold;letter-spacing:-0.2px">Pollutant</div><div style="position:absolute;left:59.7px;top:0;width:34.7px;text-align:center;line-height:19.8px;color:#fff;font-weight:bold;letter-spacing:-0.2px">AQI</div><div style="position:absolute;left:0;top:19.8px;width:59.7px;text-align:center;line-height:21.2px">PM2.5</div><div style="position:absolute;left:60.4px;top:20.4px;width:34px;height:20.5px;background:#00e400;text-align:center;line-height:20.5px">31</div></div></div>

<div class="abs shdr" style="top:5px">Select a City</div>
<div class="abs sel" style="top:32.5px"><span class="v">Bishkek</span><span class="x">×</span><span class="a"></span></div>
<div class="abs shdr" style="top:76px">Select a Parameter</div>
<div class="abs sel" style="top:103.5px"><span class="v">PM2.5</span><span class="x">×</span><span class="a"></span></div>
<div id="city" class="abs"><b>Bishkek</b>
<svg style="position:absolute;left:214px;top:19px" width="28" height="27" viewBox="0 0 28 27"><rect width="28" height="27" fill="#f2b43c"/><circle cx="6.6" cy="20.6" r="2.9" fill="#fff"/><path d="M3.8 12.2a11.2 11.2 0 0 1 11.2 11.2" fill="none" stroke="#fff" stroke-width="3.4"/><path d="M3.8 5.4a18 18 0 0 1 18 18" fill="none" stroke="#fff" stroke-width="3.4"/></svg></div>
<div id="note" class="abs">Note: Values above 500 are considered Beyond the AQI. Follow<br>recommendations for the Hazardous category. Additional<br>information on reducing exposure to extremely high levels of particle<br>pollution is available <a>here</a>.</div>

<div id="tab1" class="abs tab">AQI</div>
<div class="abs tab" style="left:103px;width:126px">Concentration</div>
<div class="abs tab" style="left:231px;width:103px">Historical</div>
<div id="tabline" class="abs"></div>
<div id="learn" class="abs">Learn more about how the Air Quality Index [AQI] is calculated from the EPA <a>here</a>.</div>

<div id="chart" class="abs"><svg width="595" height="230" viewBox="0 0 595 230" style="position:absolute;left:0;top:0;font-family:'DejaVu Sans','Liberation Sans',sans-serif">
<text x="297" y="18" text-anchor="middle" font-size="13.4" fill="#333">Bishkek - PM2.5</text>
<path d="M56.4 46.50H588.0" stroke="#e6e6e6" stroke-width="1" fill="none"/>
<text x="45" y="48.1" text-anchor="end" font-size="8" fill="#333">500</text>
<path d="M56.4 73.95H588.0" stroke="#e6e6e6" stroke-width="1" fill="none"/>
<text x="45" y="75.5" text-anchor="end" font-size="8" fill="#333">400</text>
<path d="M56.4 101.40H588.0" stroke="#e6e6e6" stroke-width="1" fill="none"/>
<text x="45" y="103.0" text-anchor="end" font-size="8" fill="#333">300</text>
<path d="M56.4 128.85H588.0" stroke="#e6e6e6" stroke-width="1" fill="none"/>
<text x="45" y="130.4" text-anchor="end" font-size="8" fill="#333">200</text>
<path d="M56.4 156.30H588.0" stroke="#e6e6e6" stroke-width="1" fill="none"/>
<text x="45" y="157.9" text-anchor="end" font-size="8" fill="#333">100</text>
<path d="M56.4 183.75H588.0" stroke="#ccd6eb" stroke-width="1" fill="none"/>
<text x="45" y="185.3" text-anchor="end" font-size="8" fill="#333">0</text>
<text transform="translate(22.5 113) rotate(-90)" text-anchor="middle" font-size="8.6" fill="#111">AQI</text>
<path d="M56.4 183.9v8" stroke="#d6deee" stroke-width="1" fill="none"/>
<path d="M78.6 183.9v8" stroke="#d6deee" stroke-width="1" fill="none"/>
<path d="M100.7 183.9v8" stroke="#d6deee" stroke-width="1" fill="none"/>
<path d="M122.8 183.9v8" stroke="#d6deee" stroke-width="1" fill="none"/>
<path d="M145.0 183.9v8" stroke="#d6deee" stroke-width="1" fill="none"/>
<path d="M167.2 183.9v8" stroke="#d6deee" stroke-width="1" fill="none"/>
<path d="M189.3 183.9v8" stroke="#d6deee" stroke-width="1" fill="none"/>
<path d="M211.4 183.9v8" stroke="#d6deee" stroke-width="1" fill="none"/>
<path d="M233.6 183.9v8" stroke="#d6deee" stroke-width="1" fill="none"/>
<path d="M255.8 183.9v8" stroke="#d6deee" stroke-width="1" fill="none"/>
<path d="M277.9 183.9v8" stroke="#d6deee" stroke-width="1" fill="none"/>
<path d="M300.0 183.9v8" stroke="#d6deee" stroke-width="1" fill="none"/>
<path d="M322.2 183.9v8" stroke="#d6deee" stroke-width="1" fill="none"/>
<path d="M344.4 183.9v8" stroke="#d6deee" stroke-width="1" fill="none"/>
<path d="M366.5 183.9v8" stroke="#d6deee" stroke-width="1" fill="none"/>
<path d="M388.6 183.9v8" stroke="#d6deee" stroke-width="1" fill="none"/>
<path d="M410.8 183.9v8" stroke="#d6deee" stroke-width="1" fill="none"/>
<path d="M432.9 183.9v8" stroke="#d6deee" stroke-width="1" fill="none"/>
<path d="M455.1 183.9v8" stroke="#d6deee" stroke-width="1" fill="none"/>
<path d="M477.2 183.9v8" stroke="#d6deee" stroke-width="1" fill="none"/>
<path d="M499.4 183.9v8" stroke="#d6deee" stroke-width="1" fill="none"/>
<path d="M521.5 183.9v8" stroke="#d6deee" stroke-width="1" fill="none"/>
<path d="M543.7 183.9v8" stroke="#d6deee" stroke-width="1" fill="none"/>
<path d="M565.9 183.9v8" stroke="#d6deee" stroke-width="1" fill="none"/>
<path d="M588.0 183.9v8" stroke="#d6deee" stroke-width="1" fill="none"/>
<rect x="62.1" y="168.7" width="10.8" height="15.2" fill="#ffff00" stroke="#7d7426" stroke-width="1"/>
<text transform="translate(71.1 194.9) rotate(-45)" text-anchor="end" font-size="8.3" fill="#666">9 AM</text>
<rect x="84.2" y="171.7" width="10.8" height="12.2" fill="#0ecf1c" stroke="#0b6b12" stroke-width="1"/>
<text transform="translate(93.2 194.9) rotate(-45)" text-anchor="end" font-size="8.3" fill="#666">10 AM</text>
<rect x="106.4" y="173.1" width="10.8" height="10.8" fill="#0ecf1c" stroke="#0b6b12" stroke-width="1"/>
<text transform="translate(115.4 194.9) rotate(-45)" text-anchor="end" font-size="8.3" fill="#666">11 AM</text>
<rect x="128.5" y="172.4" width="10.8" height="11.5" fill="#0ecf1c" stroke="#0b6b12" stroke-width="1"/>
<text transform="translate(137.5 194.9) rotate(-45)" text-anchor="end" font-size="8.3" fill="#666">12 PM</text>
<rect x="150.7" y="170.4" width="10.8" height="13.5" fill="#0ecf1c" stroke="#0b6b12" stroke-width="1"/>
<text transform="translate(159.7 194.9) rotate(-45)" text-anchor="end" font-size="8.3" fill="#666">1 PM</text>
<rect x="172.8" y="168.0" width="10.8" height="15.9" fill="#ffff00" stroke="#7d7426" stroke-width="1"/>
<text transform="translate(181.8 194.9) rotate(-45)" text-anchor="end" font-size="8.3" fill="#666">2 PM</text>
<rect x="195.0" y="164.3" width="10.8" height="19.6" fill="#ffff00" stroke="#7d7426" stroke-width="1"/>
<text transform="translate(204.0 194.9) rotate(-45)" text-anchor="end" font-size="8.3" fill="#666">3 PM</text>
<rect x="217.1" y="163.6" width="10.8" height="20.3" fill="#ffff00" stroke="#7d7426" stroke-width="1"/>
<text transform="translate(226.1 194.9) rotate(-45)" text-anchor="end" font-size="8.3" fill="#666">4 PM</text>
<rect x="239.3" y="165.0" width="10.8" height="18.9" fill="#ffff00" stroke="#7d7426" stroke-width="1"/>
<text transform="translate(248.3 194.9) rotate(-45)" text-anchor="end" font-size="8.3" fill="#666">5 PM</text>
<rect x="261.4" y="166.3" width="10.8" height="17.6" fill="#ffff00" stroke="#7d7426" stroke-width="1"/>
<text transform="translate(270.4 194.9) rotate(-45)" text-anchor="end" font-size="8.3" fill="#666">6 PM</text>
<rect x="283.6" y="167.4" width="10.8" height="16.5" fill="#ffff00" stroke="#7d7426" stroke-width="1"/>
<text transform="translate(292.6 194.9) rotate(-45)" text-anchor="end" font-size="8.3" fill="#666">7 PM</text>
<rect x="305.7" y="168.7" width="10.8" height="15.2" fill="#ffff00" stroke="#7d7426" stroke-width="1"/>
<text transform="translate(314.7 194.9) rotate(-45)" text-anchor="end" font-size="8.3" fill="#666">8 PM</text>
<rect x="327.9" y="164.3" width="10.8" height="19.6" fill="#ffff00" stroke="#7d7426" stroke-width="1"/>
<text transform="translate(336.9 194.9) rotate(-45)" text-anchor="end" font-size="8.3" fill="#666">9 PM</text>
<rect x="350.0" y="164.3" width="10.8" height="19.6" fill="#ffff00" stroke="#7d7426" stroke-width="1"/>
<text transform="translate(359.0 194.9) rotate(-45)" text-anchor="end" font-size="8.3" fill="#666">10 PM</text>
<rect x="372.2" y="163.6" width="10.8" height="20.3" fill="#ffff00" stroke="#7d7426" stroke-width="1"/>
<text transform="translate(381.2 194.9) rotate(-45)" text-anchor="end" font-size="8.3" fill="#666">11 PM</text>
<rect x="394.3" y="164.3" width="10.8" height="19.6" fill="#ffff00" stroke="#7d7426" stroke-width="1"/>
<text transform="translate(403.3 194.9) rotate(-45)" text-anchor="end" font-size="8.3" fill="#666">24. Mar 2021 12 AM</text>
<rect x="416.5" y="163.6" width="10.8" height="20.3" fill="#ffff00" stroke="#7d7426" stroke-width="1"/>
<text transform="translate(425.5 194.9) rotate(-45)" text-anchor="end" font-size="8.3" fill="#666">1 AM</text>
<rect x="438.6" y="163.6" width="10.8" height="20.3" fill="#ffff00" stroke="#7d7426" stroke-width="1"/>
<text transform="translate(447.6 194.9) rotate(-45)" text-anchor="end" font-size="8.3" fill="#666">2 AM</text>
<rect x="460.8" y="163.0" width="10.8" height="20.9" fill="#ffff00" stroke="#7d7426" stroke-width="1"/>
<text transform="translate(469.8 194.9) rotate(-45)" text-anchor="end" font-size="8.3" fill="#666">3 AM</text>
<rect x="482.9" y="164.3" width="10.8" height="19.6" fill="#ffff00" stroke="#7d7426" stroke-width="1"/>
<text transform="translate(491.9 194.9) rotate(-45)" text-anchor="end" font-size="8.3" fill="#666">4 AM</text>
<rect x="505.1" y="168.7" width="10.8" height="15.2" fill="#ffff00" stroke="#7d7426" stroke-width="1"/>
<text transform="translate(514.1 194.9) rotate(-45)" text-anchor="end" font-size="8.3" fill="#666">5 AM</text>
<rect x="527.2" y="173.4" width="10.8" height="10.5" fill="#0ecf1c" stroke="#0b6b12" stroke-width="1"/>
<text transform="translate(536.2 194.9) rotate(-45)" text-anchor="end" font-size="8.3" fill="#666">6 AM</text>
<rect x="549.4" y="174.8" width="10.8" height="9.1" fill="#0ecf1c" stroke="#0b6b12" stroke-width="1"/>
<text transform="translate(558.4 194.9) rotate(-45)" text-anchor="end" font-size="8.3" fill="#666">7 AM</text>
<rect x="571.5" y="175.5" width="10.8" height="8.4" fill="#0ecf1c" stroke="#0b6b12" stroke-width="1"/>
<text transform="translate(580.5 194.9) rotate(-45)" text-anchor="end" font-size="8.3" fill="#666">8 AM</text>
</svg></div>

<div id="cc" class="abs">
 <div class="top">
  <div class="ln" style="top:4px;font-size:11.3px;line-height:14px;letter-spacing:-0.05px">Current Conditions</div>
  <div class="ln" style="top:22px;font-size:9.1px;line-height:13px">observed at</div>
  <div class="ln" style="top:36px;font-size:11.2px;line-height:14px">Mar 23, 2021 8:00 AM (LT)</div>
 </div>
 <div class="grn">
  <div class="ln" style="top:14px;line-height:16px">31 AQI</div>
  <div class="ln" style="top:35px;line-height:16px">Good</div>
  <div class="ln" style="top:56px;line-height:16px">PM2.5</div>
 </div>
 <div class="ln" style="top:147px;font-size:9.1px;font-weight:bold;letter-spacing:-0.1px;line-height:13px;color:#222">Health Message</div>
 <div class="hm">The AQI value for your community is between 0 and 50. Air quality is satisfactory and poses little or no health risk.</div>
</div>
<div id="note2" class="abs">Note: Values above 500 are considered Beyond</div>
</body>
</html>
